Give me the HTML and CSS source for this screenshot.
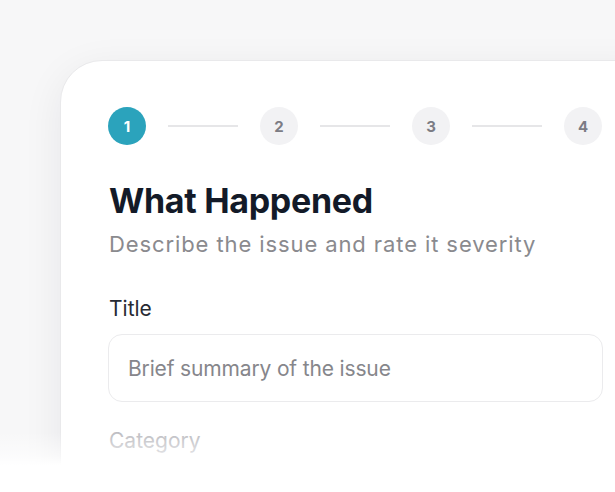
FILE: index.html
```html
<!DOCTYPE html>
<html>
<head>
<meta charset="utf-8">
<link rel="stylesheet" href="styles.css">
</head>
<body>
<div class="stage">
  <div class="card">
    <div class="stepper">
      <div class="step active">1</div>
      <div class="line"></div>
      <div class="step">2</div>
      <div class="line"></div>
      <div class="step">3</div>
      <div class="line"></div>
      <div class="step">4</div>
    </div>
    <h1 class="heading">What Happened</h1>
    <p class="sub">Describe the issue and rate it severity</p>
    <label class="label">Title</label>
    <div class="input">Brief summary of the issue</div>
    <label class="label faded">Category</label>
  </div>
  <div class="fade"></div>
</div>
</body>
</html>
```

FILE: styles.css
```css
html, body {
  margin: 0;
  padding: 0;
  background: #f7f7f8;
  overflow: hidden;
}
.stage {
  position: relative;
  width: 615px;
  height: 492px;
  overflow: hidden;
  font-family: Inter, "Liberation Sans", sans-serif;
}
.card {
  margin: 60px 0 0 60px;
  width: 620px;
  height: 520px;
  box-sizing: border-box;
  background: #fff;
  border: 1px solid #e9e9eb;
  border-radius: 42px;
  box-shadow: 0 10px 40px rgba(20, 20, 40, 0.07);
  padding: 46px 0 0 47px;
}
.stepper {
  display: flex;
  align-items: center;
  gap: 22px;
  width: 494px;
}
.step {
  width: 38px;
  height: 38px;
  border-radius: 50%;
  background: #f2f2f4;
  color: #7c7c84;
  font-weight: 700;
  font-size: 15px;
  display: flex;
  align-items: center;
  justify-content: center;
  flex: none;
}
.step.active {
  background: #2ba3bc;
  color: #fff;
}
.line {
  flex: 1;
  height: 2px;
  background: #e6e6e8;
}
.heading {
  margin: 36px 0 0 1px;
  font-size: 34px;
  line-height: 40px;
  font-weight: 700;
  color: #131a28;
  letter-spacing: -0.3px;
}
.sub {
  margin: 9px 0 0 1px;
  font-size: 22px;
  line-height: 28px;
  color: #8a8a8e;
  letter-spacing: 0.9px;
}
.label {
  display: block;
  margin: 38px 0 0 1px;
  font-size: 21px;
  line-height: 26px;
  color: #272a33;
}
.label.faded {
  color: #bdbdc2;
  margin-top: 26px;
}
.input {
  margin-top: 12px;
  width: 495px;
  height: 68px;
  box-sizing: border-box;
  border: 1px solid #ebebed;
  border-radius: 14px;
  padding: 0 19px;
  display: flex;
  align-items: center;
  font-size: 21px;
  color: #86868b;
  letter-spacing: -0.15px;
}
.fade {
  position: absolute;
  left: 0;
  right: 0;
  bottom: 0;
  height: 60px;
  background: linear-gradient(to bottom, rgba(255,255,255,0) 0%, rgba(255,255,255,0.6) 40%, #fff 55%);
}
```
